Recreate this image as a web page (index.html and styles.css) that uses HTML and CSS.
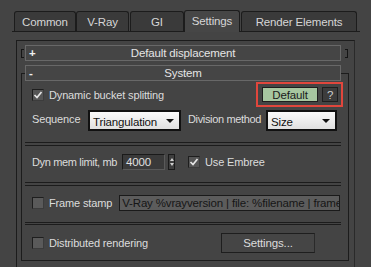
FILE: index.html
```html
<!DOCTYPE html>
<html lang="en">
<head>
  <meta charset="UTF-8">
  <title>Render Setup - Settings</title>
  <link rel="stylesheet" href="styles.css">
</head>
<body>

<div class="tabs">
  <div class="tab tab-common">Common</div>
  <div class="tab tab-vray">V-Ray</div>
  <div class="tab tab-gi">GI</div>
  <div class="tab tab-settings active">Settings</div>
  <div class="tab tab-elements">Render Elements</div>
</div>

<div class="panel">
  <div class="rollout-closed">
    <span class="bracket bracket-left"></span>
    <div class="rollout-head"><span class="sign">+</span><span class="title">Default displacement</span></div>
    <span class="bracket bracket-right"></span>
  </div>

  <div class="rollout">
    <div class="rollout-head"><span class="sign">-</span><span class="title">System</span></div>

    <div class="row row-bucket">
      <label class="check">
        <span class="box checked"><svg width="10" height="10" viewBox="0 0 10 10"><polyline points="1.5,5 4,7.5 8.5,2" fill="none" stroke="#e6e6e6" stroke-width="1.7"/></svg></span>
        Dynamic bucket splitting
      </label>
      <div class="highlight">
        <button class="btn-default">Default</button>
        <button class="btn-help">?</button>
      </div>
    </div>

    <div class="row row-sequence">
      <span class="label label-seq">Sequence</span>
      <div class="dropdown dd-seq">Triangulation<span class="arrow"></span></div>
      <span class="label label-div">Division method</span>
      <div class="dropdown dd-div">Size<span class="arrow"></span></div>
    </div>

    <div class="sep sep-1"></div>

    <div class="row row-mem">
      <span class="label label-mem">Dyn mem limit, mb</span>
      <div class="spin-input">4000</div>
      <div class="spin-arrows"><span class="up"></span><span class="down"></span></div>
      <label class="check check-embree">
        <span class="box checked"><svg width="10" height="10" viewBox="0 0 10 10"><polyline points="1.5,5 4,7.5 8.5,2" fill="none" stroke="#e6e6e6" stroke-width="1.7"/></svg></span>
        Use Embree
      </label>
    </div>

    <div class="sep sep-2"></div>

    <div class="row row-stamp">
      <label class="check"><span class="box"></span>Frame stamp</label>
      <div class="stamp-input">V-Ray %vrayversion | file: %filename | frame: %frame | primitives: %primitives</div>
    </div>

    <div class="sep sep-3"></div>

    <div class="row row-dr">
      <label class="check"><span class="box"></span>Distributed rendering</label>
      <button class="btn-settings">Settings...</button>
    </div>
  </div>
</div>

</body>
</html>
```

FILE: styles.css
```css
* {
  margin: 0;
  padding: 0;
  box-sizing: border-box;
}
body {
  font-family: 'Liberation Sans', Arial, sans-serif;
  font-size: 11px;
  letter-spacing: -0.15px;
  background: #444444;
  color: #dcdcdc;
  height: 267px;
  overflow: hidden;
}

/* tab strip */
.tabs {
  display: flex;
  align-items: flex-end;
  margin: 10px 0 0 12px;
  width: 348px;
  height: 22px;
  padding-left: 2px;
  border-bottom: 1px solid #1c1c1c;
}
.tab {
  height: 20px;
  border: 1px solid #1c1c1c;
  border-bottom: none;
  border-radius: 3px 3px 0 0;
  background: #3a3a3a;
  display: flex;
  align-items: center;
  justify-content: center;
  font-size: 11.5px;
  color: #d6d6d6;
}
.tab-common { width: 62px; }
.tab-vray { width: 53px; }
.tab-gi { width: 54px; margin-left: 1px; }
.tab-settings { width: 56px; }
.tab-elements { width: 116px; margin-left: 1px; }
.tab.active {
  height: 22px;
  margin-bottom: -1px;
  background: #464646;
  padding-bottom: 1px;
}

/* scroll panel */
.panel {
  margin: 8px 0 0 16px;
  width: 339px;
  height: 230px;
  border: 1px solid #1c1c1c;
  border-right-color: #2a2a2a;
  border-bottom: none;
  padding: 4px 5px 0 4px;
}
.rollout-closed {
  display: flex;
  align-items: center;
  padding-right: 1px;
}
.rollout-closed .rollout-head {
  flex: 1;
  margin: 0 4px 0 1px;
}
.bracket {
  width: 3px;
  height: 9px;
  border: 1px solid #151515;
}
.bracket-left { border-right: none; }
.bracket-right { border-left: none; }

.rollout-head {
  height: 16px;
  border: 1px solid #686868;
  background: #454545;
  display: flex;
  align-items: center;
  font-size: 11.5px;
  color: #e4e4e4;
}
.rollout-head .sign {
  width: 14px;
  padding-left: 3px;
  font-weight: bold;
  color: #f0f0f0;
}
.rollout-head .title {
  flex: 1;
  text-align: center;
  margin-right: 14px;
}

.rollout {
  margin-top: 12px;
  height: 188px;
  border: 1px solid #1c1c1c;
  padding: 0 7px 0 3px;
}
.rollout > .rollout-head {
  margin-top: -9px;
}

/* rows */
.row {
  display: flex;
  align-items: center;
  padding-left: 7px;
}
.row-bucket {
  height: 27px;
  padding-right: 3px;
  justify-content: space-between;
}
.row-sequence {
  height: 21px;
  margin-top: 2px;
}
.row-mem {
  height: 16px;
  margin-top: 8px;
}
.row-stamp {
  height: 16px;
  margin-top: 9px;
}
.row-dr {
  height: 20px;
  margin-top: 8px;
}

.label {
  white-space: nowrap;
}
.label-seq { width: 56px; margin-top: -4px; }
.label-div { width: 78px; margin-left: 7px; margin-top: -4px; letter-spacing: -0.35px; }
.label-mem { width: 90px; letter-spacing: -0.35px; }

.check {
  display: flex;
  align-items: center;
  white-space: nowrap;
}
.box {
  width: 12px;
  height: 12px;
  margin-right: 5px;
  border: 1px solid #1e1e1e;
  border-right-color: #3c3c3c;
  border-bottom-color: #3c3c3c;
  background: #5a5a5a;
  display: flex;
  align-items: center;
  justify-content: center;
}
.box.checked {
  background: #555555;
}
.check-embree {
  margin-left: 13px;
}

/* Default / ? buttons */
.highlight {
  display: flex;
  gap: 4px;
  padding-left: 1px;
  outline: 2px solid #e0463c;
  outline-offset: 3px;
}
button {
  font-family: inherit;
  font-size: 11.5px;
  letter-spacing: inherit;
}
.btn-default {
  width: 56px;
  height: 15px;
  border: 1px solid #1e1e1e;
  background: #a7c6a0;
  color: #1a1a1a;
}
.btn-help {
  width: 16px;
  height: 15px;
  border: 1px solid #1e1e1e;
  background: #3c3c3c;
  color: #cfcfcf;
}

/* dropdowns */
.dropdown {
  position: relative;
  height: 21px;
  border: 2px solid #111111;
  background: linear-gradient(#fafafa, #e0e0e0);
  color: #111111;
  font-size: 11.5px;
  padding: 4px 0 0 3px;
  white-space: nowrap;
}
.dd-seq { width: 93px; }
.dd-div { width: 71px; }
.arrow {
  position: absolute;
  right: 5px;
  top: 7px;
  border-left: 4px solid transparent;
  border-right: 4px solid transparent;
  border-top: 4px solid #111111;
}

/* spinner */
.spin-input {
  width: 43px;
  height: 16px;
  border: 1px solid #1a1a1a;
  border-right-color: #5a5a5a;
  border-bottom-color: #5a5a5a;
  background: #3a3a3a;
  color: #e0e0e0;
  font-size: 11.5px;
  padding: 1px 0 0 3px;
}
.spin-arrows {
  width: 7px;
  height: 16px;
  margin-left: 3px;
  border: 1px solid #1a1a1a;
  background: #3e3e3e;
  display: flex;
  flex-direction: column;
  align-items: center;
  justify-content: center;
  gap: 2px;
}
.spin-arrows .up {
  border-left: 2px solid transparent;
  border-right: 2px solid transparent;
  border-bottom: 3px solid #d0d0d0;
}
.spin-arrows .down {
  border-left: 2px solid transparent;
  border-right: 2px solid transparent;
  border-top: 3px solid #d0d0d0;
}

/* frame stamp */
.stamp-input {
  width: 221px;
  height: 16px;
  margin-left: 7px;
  border: 1px solid #1a1a1a;
  background: #5c5c5c;
  color: #161616;
  font-size: 11.5px;
  padding: 1px 0 0 2px;
  white-space: nowrap;
  overflow: hidden;
}

.btn-settings {
  width: 94px;
  height: 20px;
  margin-left: auto;
  margin-right: 26px;
  border: 1px solid #1e1e1e;
  border-right-color: #2a2a2a;
  background: #454545;
  color: #dcdcdc;
}

/* group separators */
.sep {
  height: 4px;
  border-top: 1px solid #1c1c1c;
  border-bottom: 1px solid #1c1c1c;
}
.sep-1 { margin-top: 11px; }
.sep-2 { margin-top: 12px; }
.sep-3 { margin-top: 11px; height: 3px; }
```
